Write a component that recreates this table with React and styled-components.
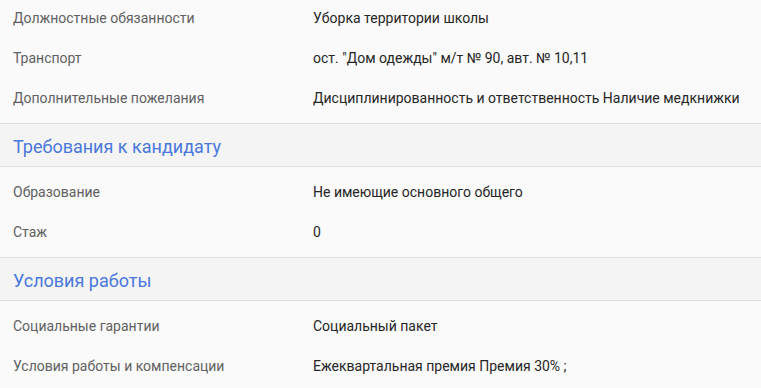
import React from "react";
import styled, { createGlobalStyle } from "styled-components";

const GlobalStyle = createGlobalStyle`
  html, body {
    margin: 0;
    padding: 0;
    background: #fafafa;
    overflow: hidden;
  }
  body {
    font-family: Roboto, "Liberation Sans", sans-serif;
  }
`;

const Page = styled.div`
  width: 761px;
  background: #fafafa;
  margin-top: -7px;
`;

const Section = styled.section`
  display: flex;
  flex-direction: column;
`;

const SectionHeader = styled.div`
  height: 40px;
  padding: 2px 0 0 13px;
  display: flex;
  align-items: center;
  background: #f4f4f4;
  border-top: 1px solid #dedede;
  border-bottom: 1px solid #dedede;
`;

const SectionTitle = styled.h3`
  margin: 0;
  font-weight: 400;
  font-size: 18px;
  color: #4a78dc;
`;

const Rows = styled.div`
  padding: 5px 0;
  display: flex;
  flex-direction: column;
`;

const Row = styled.div`
  height: 40px;
  display: flex;
  align-items: center;
  font-size: 14px;
`;

const Label = styled.div`
  width: 300px;
  padding-left: 13px;
  color: #616161;
`;

const Value = styled.div`
  flex: 1;
  color: #262626;
  white-space: nowrap;
`;

const sections = [
  {
    rows: [
      ["Должностные обязанности", "Уборка территории школы"],
      ["Транспорт", 'ост. "Дом одежды" м/т № 90, авт. № 10,11'],
      [
        "Дополнительные пожелания",
        "Дисциплинированность и ответственность Наличие медкнижки",
      ],
    ],
  },
  {
    title: "Требования к кандидату",
    rows: [
      ["Образование", "Не имеющие основного общего"],
      ["Стаж", "0"],
    ],
  },
  {
    title: "Условия работы",
    rows: [
      ["Социальные гарантии", "Социальный пакет"],
      ["Условия работы и компенсации", "Ежеквартальная премия Премия 30% ;"],
    ],
  },
];

const App = () => {
  return (
    <Page>
      <GlobalStyle />
      {sections.map((section, i) => (
        <Section key={i}>
          {section.title && (
            <SectionHeader>
              <SectionTitle>{section.title}</SectionTitle>
            </SectionHeader>
          )}
          <Rows>
            {section.rows.map(([label, value]) => (
              <Row key={label}>
                <Label>{label}</Label>
                <Value>{value}</Value>
              </Row>
            ))}
          </Rows>
        </Section>
      ))}
    </Page>
  );
};

export default App;
